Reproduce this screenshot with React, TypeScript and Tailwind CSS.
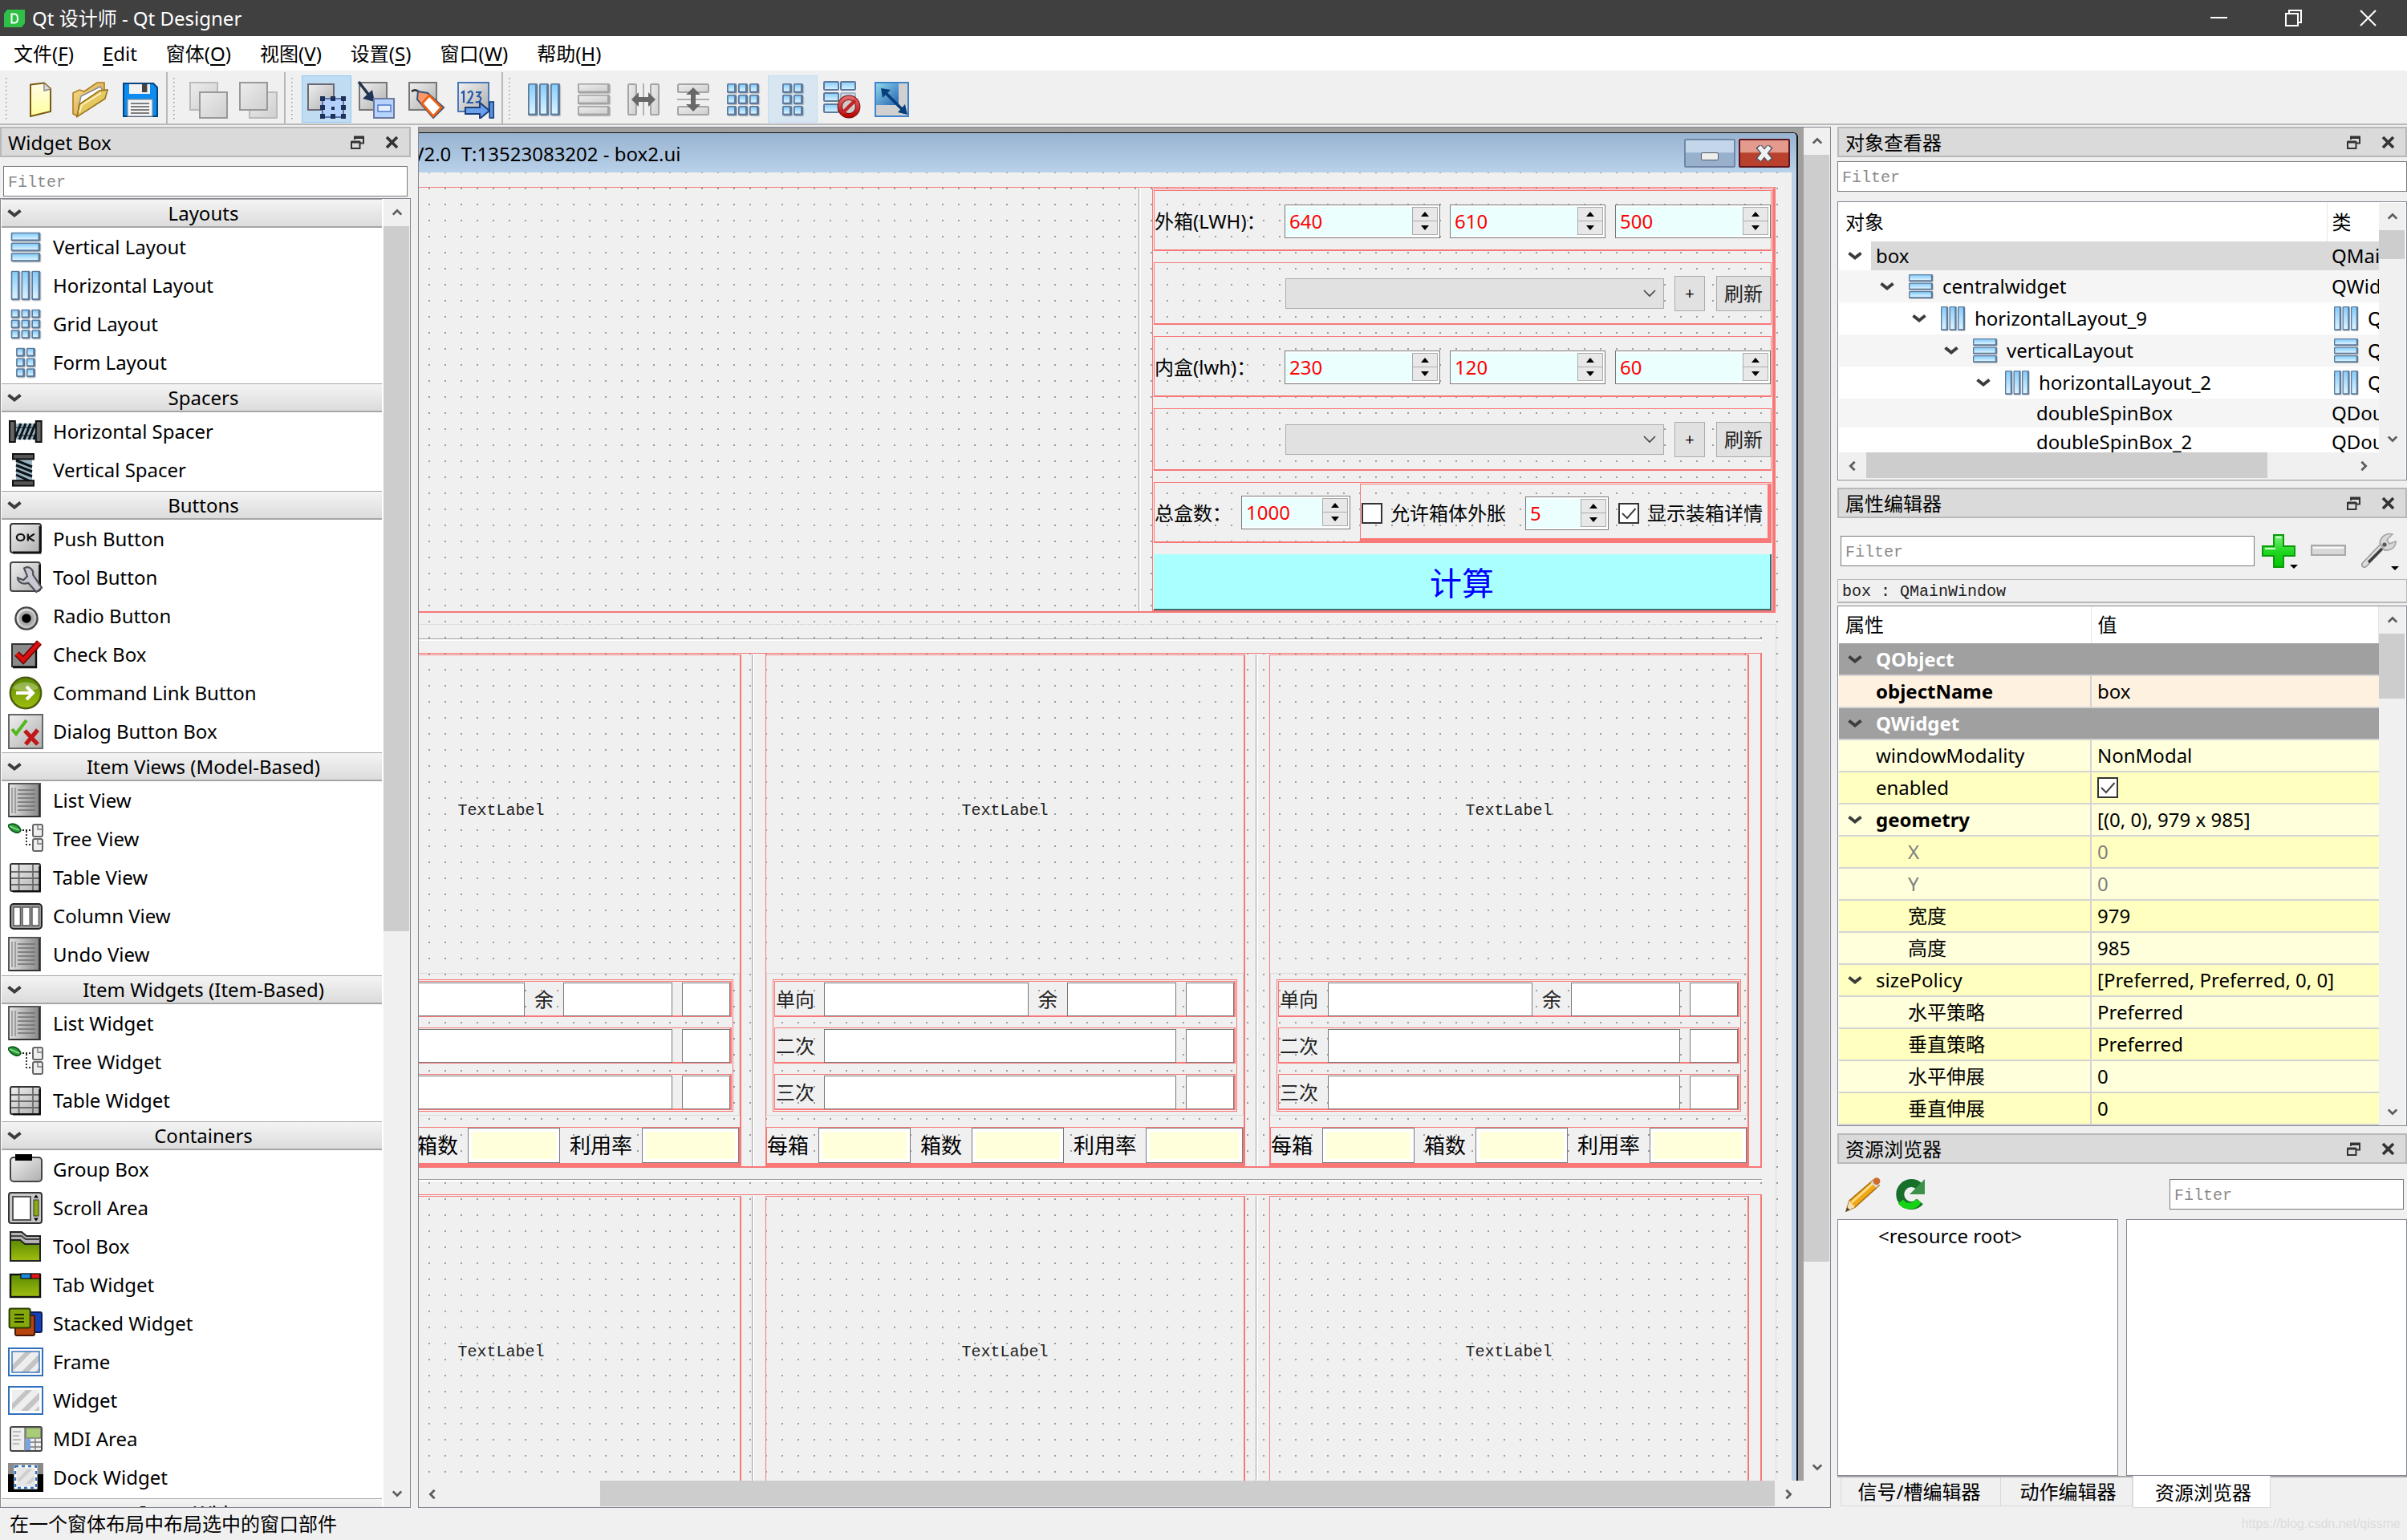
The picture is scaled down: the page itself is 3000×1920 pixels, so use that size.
import type { ReactNode } from 'react'

/* ---------- shared svg paint ---------- */

function PaintDefs() {
  return (
    <svg className="absolute h-0 w-0" aria-hidden="true">
      <defs>
        <linearGradient id="blue" x1="0" y1="0" x2="0" y2="1">
          <stop offset="0" stopColor="#86cdfb" />
          <stop offset="1" stopColor="#dcf3ff" />
        </linearGradient>
        <linearGradient id="gray" x1="0" y1="0" x2="1" y2="1">
          <stop offset="0" stopColor="#f0f0f0" />
          <stop offset="1" stopColor="#aeaeae" />
        </linearGradient>
        <linearGradient id="dark" x1="0" y1="0" x2="1" y2="0">
          <stop offset="0" stopColor="#e4e4e4" />
          <stop offset="1" stopColor="#858585" />
        </linearGradient>
        <linearGradient id="pale" x1="0" y1="0" x2="1" y2="1">
          <stop offset="0" stopColor="#ececec" />
          <stop offset="1" stopColor="#cfcfcf" />
        </linearGradient>
        <linearGradient id="yellow" x1="0" y1="0" x2="0" y2="1">
          <stop offset="0" stopColor="#fffbe8" />
          <stop offset="1" stopColor="#ffff9c" />
        </linearGradient>
        <linearGradient id="green" x1="0" y1="0" x2="0" y2="1">
          <stop offset="0" stopColor="#5a8a00" />
          <stop offset="1" stopColor="#a0be10" />
        </linearGradient>
        <linearGradient id="lime" x1="0" y1="0" x2="0" y2="1">
          <stop offset="0" stopColor="#7ef07e" />
          <stop offset="0.5" stopColor="#22d822" />
          <stop offset="1" stopColor="#04c404" />
        </linearGradient>
        <linearGradient id="folder" x1="0" y1="0" x2="1" y2="1">
          <stop offset="0" stopColor="#fbe09a" />
          <stop offset="1" stopColor="#c89a28" />
        </linearGradient>
        <linearGradient id="red" x1="0" y1="0" x2="0" y2="1">
          <stop offset="0" stopColor="#e06a6a" />
          <stop offset="1" stopColor="#b80808" />
        </linearGradient>
        <linearGradient id="sky" x1="0" y1="0" x2="1" y2="1">
          <stop offset="0" stopColor="#8fd8ea" />
          <stop offset="1" stopColor="#2463b4" />
        </linearGradient>
      </defs>
    </svg>
  )
}

function Icon({ children, size = 'size-11', box = '0 0 22 22' }: { children: ReactNode; size?: string; box?: string }) {
  return <svg viewBox={box} className={`${size} shrink-0`} fill="none" aria-hidden="true">{children}</svg>
}

/* layout icons are all a block of cols x rows tiles */
function Cells({ cols, rows, size = 'size-11', gray }: { cols: number; rows: number; size?: string; gray?: boolean }) {
  const total = cols === 2 ? 13 : 20
  const left = (24 - total) / 2
  const w = (total - (cols - 1)) / cols
  const h = (20 - (rows - 1)) / rows
  const tiles = []
  for (let c = 0; c < cols; c++) {
    for (let r = 0; r < rows; r++) {
      const x = left + c * (w + 1)
      const y = 2 + r * (h + 1)
      tiles.push(
        <g key={`${c}-${r}`}>
          <rect x={x + 0.6} y={y + 0.6} width={w} height={h} rx="0.8" fill="#000" opacity="0.18" />
          <rect x={x} y={y} width={w} height={h} rx="0.8" fill={gray ? '#a2a2a2' : '#5d7a9c'} />
          <rect x={x + 0.9} y={y + 0.8} width={w - 2.4} height={h - 2} fill={gray ? 'url(#pale)' : 'url(#blue)'} />
        </g>
      )
    }
  }
  return <Icon size={size} box="0 0 24 24">{tiles}</Icon>
}

function Chevron({ className = 'h-3 w-[18px]' }: { className?: string }) {
  return (
    <svg viewBox="0 0 18 12" className={`${className} shrink-0`} fill="none" stroke="#3c3c3c" strokeWidth="4" aria-hidden="true">
      <path d="M1.5 2.5 9 8.5l7.5-6" />
    </svg>
  )
}

/* ---------- widget box icons ---------- */

const okIcon = (
  <Icon>
    <rect x="1.5" y="1.5" width="19" height="18" rx="1.5" fill="url(#gray)" stroke="#333" />
    <path d="M20 3v16.5H3" stroke="#111" strokeWidth="1.4" />
    <ellipse cx="7.8" cy="10" rx="2.4" ry="2" stroke="#111" strokeWidth="1.1" />
    <path d="M12.4 7.8v4.5M16.4 7.8l-3.6 2.4 3.6 2.1" stroke="#111" strokeWidth="1.1" />
  </Icon>
)
const toolIcon = (
  <Icon>
    <rect x="1.5" y="1.5" width="18.5" height="18" rx="1.5" fill="url(#gray)" stroke="#444" />
    <path d="M19.800 3v16" stroke="#111" strokeWidth="1.4" />
    <path d="M10 5.2c3-1.6 6 .4 5.6 4.2l5.400 8-3.400 2.600-5-5.600c-3 1.2-6.4-.2-6.6-3.200l3.600 1.4 2.400-2.400z" fill="#c8c8d2" stroke="#50505a" strokeWidth="1.100" />
  </Icon>
)
const radioIcon = (
  <Icon>
    <circle cx="11.5" cy="12.5" r="6.8" fill="url(#gray)" stroke="#444" strokeWidth="1.2" />
    <circle cx="11.5" cy="12.5" r="4.8" fill="#aaa" />
    <circle cx="11.5" cy="12.5" r="2.9" fill="#000" />
  </Icon>
)
const checkIcon = (
  <Icon>
    <rect x="2.5" y="4.5" width="15" height="14" fill="#8a8a8a" stroke="#333" />
    <path d="M17.5 6v13H3" stroke="#111" strokeWidth="1.2" />
    <path d="M5.5 10.5 9.5 14.5 19.5 3.5" stroke="#600" strokeWidth="4" />
    <path d="M5.5 10.5 9.5 14.5 19.5 3.5" stroke="#d81010" strokeWidth="2.6" />
  </Icon>
)
const commandIcon = (
  <Icon>
    <circle cx="11" cy="11" r="9.6" fill="url(#green)" stroke="#4c5c10" strokeWidth="1.2" />
    <path d="M3 8a9 7 0 0 1 16 0q-8 4-16 0z" fill="#fff" opacity="0.3" />
    <path d="M5 11h10M11.500 7l4 4-4 4" stroke="#fff" strokeWidth="2" />
  </Icon>
)
const dialogIcon = (
  <Icon>
    <rect x="0.5" y="0.5" width="21" height="21" fill="url(#gray)" stroke="#666" />
    <path d="M2.5 9.5 5 12.500 11.500 4" stroke="#52b81c" strokeWidth="2" />
    <path d="M10.5 10.5 18.5 19M18.5 10 11 19" stroke="#c01818" strokeWidth="2.6" />
  </Icon>
)
const hSpacerIcon = (
  <Icon>
    <rect x="4" y="6" width="14" height="10" fill="#9ab4c4" />
    <path d="M4 16 8 6M7 16l4-10M10 16l4-10M13 16l4-10M16 16l2-5" stroke="#0c1418" strokeWidth="1.5" />
    <path d="M4 8.500h14M4 13.500h14" stroke="#0c1418" strokeWidth="0.6" />
    <rect x="1" y="4.500" width="3.4" height="13" fill="#666" stroke="#111" />
    <rect x="17.4" y="4.500" width="3.4" height="13" fill="#666" stroke="#111" />
  </Icon>
)
const vSpacerIcon = (
  <Icon>
    <rect x="5" y="4" width="10" height="14" fill="#9ab4c4" />
    <path d="M5 5 15 9M5 8l10 4M5 11l10 4M5 14l9 4" stroke="#0c1418" strokeWidth="1.5" />
    <rect x="3" y="1" width="13" height="3.2" fill="#555" stroke="#111" />
    <rect x="3" y="17.6" width="13" height="3.2" fill="#555" stroke="#111" />
  </Icon>
)
const listIcon = (
  <Icon>
    <rect x="0.5" y="0.5" width="19.5" height="20.5" fill="url(#dark)" stroke="#555" />
    <path d="M2.5 3v16M4.500 3v16" stroke="#888" strokeWidth="0.7" />
    <path d="M6 4.500h11M6 7h11M6 9.500h11M6 12h11M6 14.500h11M6 17h11" stroke="#707070" strokeWidth="0.700" />
    <path d="M19.500 1v20H1" stroke="#333" strokeWidth="1" />
  </Icon>
)
const treeIcon = (
  <Icon>
    <path d="M0 2.500C3 .5 6.500 2 8 5.500 7 8.500 2 7 0 2.500z" fill="#2c9c3c" stroke="#0d5a1a" strokeWidth="0.9" />
    <path d="M1 3l6 2.6" stroke="#9be29b" strokeWidth="0.7" />
    <path d="M9 5.500h5M11.500 6v8.500h3" stroke="#222" strokeWidth="0.9" strokeDasharray="1 1" />
    <rect x="15.5" y="2" width="6" height="7.500" rx="1" fill="#eee" stroke="#666" />
    <rect x="15.5" y="11" width="6" height="7.500" rx="1" fill="#eee" stroke="#666" />
    <path d="M18.500 2v3h3M18.500 11v3h3" stroke="#777" strokeWidth="0.700" />
  </Icon>
)
const tableIcon = (
  <Icon>
    <rect x="1.5" y="2.5" width="18.5" height="17" rx="1" fill="url(#gray)" stroke="#333" />
    <path d="M2 7.500h18M2 11.500h18M2 15.500h18M6.800 3v16M15.500 3v16" stroke="#6a6a6a" strokeWidth="0.9" />
    <path d="M19.800 4v15.600H3" stroke="#111" strokeWidth="1.3" />
  </Icon>
)
const columnIcon = (
  <Icon>
    <rect x="1.5" y="3.5" width="19.5" height="15.5" rx="2" fill="#999" stroke="#222" />
    <path d="M3.500 5.500h4.200v11.500H3.500zM9 5.500h4.600v11.500H9zM15 5.500h4.200v11.500H15z" fill="#fff" stroke="#555" strokeWidth="0.7" />
  </Icon>
)
const groupIcon = (
  <Icon>
    <rect x="1.5" y="3.5" width="19.5" height="15" rx="2" fill="url(#gray)" stroke="#444" />
    <rect x="4.5" y="1.5" width="10.5" height="4" fill="#000" />
  </Icon>
)
const scrollIcon = (
  <Icon>
    <rect x="0.5" y="1.5" width="20.5" height="19" rx="1.5" fill="#c8c8c8" stroke="#333" />
    <rect x="3" y="4" width="11" height="14.5" fill="#fff" stroke="#555" />
    <rect x="16" y="6" width="3" height="10" fill="#8cae08" stroke="#333" strokeWidth="0.5" />
    <path d="M16 4.800l1.500-2 1.500 2zM16 17.200l1.500 2 1.500-2z" fill="#000" />
  </Icon>
)
const toolBoxIcon = (
  <Icon>
    <path d="M1.500 2h7l3 2.500h8.500V20H1.500z" fill="#b4b4b4" stroke="#222" />
    <path d="M1.500 7h6l3 2.500h9.500V20H1.500z" fill="url(#green)" stroke="#222" />
    <path d="M2 4.500h6.500l2.500 2h9" stroke="#444" strokeWidth="0.9" />
  </Icon>
)
const tabIcon = (
  <Icon>
    <rect x="1.5" y="4.5" width="18.5" height="14" fill="url(#green)" stroke="#111" strokeWidth="1.2" />
    <rect x="8" y="4" width="6" height="3" fill="#1a8be0" stroke="#111" strokeWidth="0.6" />
    <rect x="14.4" y="4" width="5.4" height="3" fill="#e81414" stroke="#111" strokeWidth="0.6" />
  </Icon>
)
const stackedIcon = (
  <Icon>
    <rect x="9" y="4" width="12" height="12.5" rx="1" fill="#1440b8" stroke="#0a1c58" />
    <rect x="4.5" y="6" width="12" height="12.5" rx="1" fill="#b84410" stroke="#481804" />
    <rect x="0.8" y="1.8" width="13" height="12" rx="1" fill="#86a80c" stroke="#2a3a04" />
    <path d="M4 5.500h6M4 7.800h6M4 10h6" stroke="#1a2a00" strokeWidth="0.9" />
  </Icon>
)
const stripes = (
  <>
    <rect x="2.5" y="4.5" width="17" height="13" fill="#eee" />
    <path d="M2.500 13 11 4.500h4L2.500 17zM8 17.500 19.500 6v4.500l-7 7zM16.500 17.500l3-3v3z" fill="#c4c4c4" />
  </>
)
const frameIcon = (
  <Icon>
    <rect x="0.5" y="2.5" width="21" height="17" fill="#fff" stroke="#3070bc" />
    {stripes}
    <rect x="2.5" y="4.5" width="17" height="13" stroke="#3070bc" strokeWidth="0.7" />
  </Icon>
)
const widgetIcon = (
  <Icon>
    <rect x="0.5" y="2.5" width="21" height="17" fill="#fff" stroke="#3070bc" />
    {stripes}
  </Icon>
)
const mdiIcon = (
  <Icon>
    <rect x="1.5" y="3.5" width="19.5" height="15" rx="1" fill="#eee" stroke="#444" />
    <rect x="11" y="4" width="9.5" height="6.5" fill="#a8cc78" stroke="#666" strokeWidth="0.6" />
    <path d="M11 11h3v7h-3z" fill="#7aa4e0" />
    <path d="M3 6.500h5M3 9h4M3 11.500h5M3 14h4" stroke="#aaa" strokeWidth="0.8" />
    <path d="M10.500 4v14.500M14 13h6.500M14 16h6.500M17 11v7" stroke="#777" strokeWidth="0.7" />
  </Icon>
)
const dockIcon = (
  <Icon>
    <path d="M0 2h22v18H0z" fill="#000" />
    <path d="M0 2h22v7H0z" fill="#8a8a8a" />
    <rect x="4.5" y="4" width="13" height="13.5" fill="#e6e6e6" stroke="#fff" strokeWidth="1.6" />
    <rect x="4.5" y="4" width="13" height="13.5" stroke="#3070bc" strokeWidth="1.2" strokeDasharray="2 2" />
    <path d="M6 12l6-6h3l-8 8zM11 15l5-5v3l-2 2z" fill="#cfcfcf" />
  </Icon>
)

const widgetGroups: { title: string; items: [string, ReactNode][] }[] = [
  {
    title: 'Layouts',
    items: [
      ['Vertical Layout', <Cells cols={1} rows={3} />],
      ['Horizontal Layout', <Cells cols={3} rows={1} />],
      ['Grid Layout', <Cells cols={3} rows={3} />],
      ['Form Layout', <Cells cols={2} rows={3} />],
    ],
  },
  { title: 'Spacers', items: [['Horizontal Spacer', hSpacerIcon], ['Vertical Spacer', vSpacerIcon]] },
  {
    title: 'Buttons',
    items: [
      ['Push Button', okIcon],
      ['Tool Button', toolIcon],
      ['Radio Button', radioIcon],
      ['Check Box', checkIcon],
      ['Command Link Button', commandIcon],
      ['Dialog Button Box', dialogIcon],
    ],
  },
  {
    title: 'Item Views (Model-Based)',
    items: [
      ['List View', listIcon],
      ['Tree View', treeIcon],
      ['Table View', tableIcon],
      ['Column View', columnIcon],
      ['Undo View', listIcon],
    ],
  },
  {
    title: 'Item Widgets (Item-Based)',
    items: [['List Widget', listIcon], ['Tree Widget', treeIcon], ['Table Widget', tableIcon]],
  },
  {
    title: 'Containers',
    items: [
      ['Group Box', groupIcon],
      ['Scroll Area', scrollIcon],
      ['Tool Box', toolBoxIcon],
      ['Tab Widget', tabIcon],
      ['Stacked Widget', stackedIcon],
      ['Frame', frameIcon],
      ['Widget', widgetIcon],
      ['MDI Area', mdiIcon],
      ['Dock Widget', dockIcon],
    ],
  },
  { title: 'Input Widgets', items: [] },
]

/* ---------- toolbar ---------- */

const T = ({ children }: { children: ReactNode }) => <Icon size="size-12" box="0 0 24 24">{children}</Icon>

const grayPage = <rect x="1.5" y="1.5" width="17" height="17" fill="url(#gray)" stroke="#777" />

const toolGroups: { label: string; icon: ReactNode; state?: 'on' | 'hover' }[][] = [
  [
    {
      label: '新建',
      icon: (
        <T>
          <path d="M5.500 2.800 14 1.800l4 3.500V19.500L5.500 22.500z" fill="url(#yellow)" stroke="#7a5a10" />
          <path d="M14 2v4.500l4-1" fill="#ddd" stroke="#888" strokeWidth="0.7" />
        </T>
      ),
    },
    {
      label: '打开',
      icon: (
        <T>
          <path d="M1 8 5 6l3 1L16 1.500h4.500v6L3 22 1 21z" fill="url(#folder)" stroke="#b07c1c" strokeWidth="0.8" />
          <path d="M4.500 17 6 10l12-6 2 3.500z" fill="#fff" stroke="#889" strokeWidth="0.7" />
          <path d="M3.500 22.800 5 15l12.500-8.500 5-.5-1.500 5.500z" fill="#e4c860" stroke="#98701c" strokeWidth="0.8" />
          <path d="M5 20l1.500-4.500 12-7.500" stroke="#fff6c0" strokeWidth="0.9" />
        </T>
      ),
    },
    {
      label: '保存',
      icon: (
        <T>
          <path d="M1.500 2h18.500l2.500 2.500V22.500h-21z" fill="#0c8cf0" stroke="#06447c" />
          <rect x="5" y="2.5" width="13" height="6" fill="#f2f2f2" />
          <rect x="13" y="2.5" width="3.2" height="5" fill="#444" />
          <rect x="4" y="12" width="15.5" height="10.5" fill="#f4f4f4" stroke="#888" strokeWidth="0.5" />
          <path d="M6 14.500h11.500M6 16.500h11.500M6 18.500h11.500M6 20.500h11.500" stroke="#555" strokeWidth="0.8" />
        </T>
      ),
    },
  ],
  [
    {
      label: '放到后面',
      icon: <T><rect x="0.5" y="1.5" width="17" height="17" fill="url(#pale)" stroke="#bbb" /><rect x="6.5" y="7.5" width="17" height="16" fill="url(#pale)" stroke="#999" /></T>,
    },
    {
      label: '放到前面',
      icon: <T><rect x="6.5" y="7.5" width="17" height="16" fill="url(#pale)" stroke="#bbb" /><rect x="0.5" y="1.5" width="17" height="17" fill="url(#pale)" stroke="#999" /></T>,
    },
  ],
  [
    {
      label: '编辑窗口部件',
      state: 'on',
      icon: (
        <T>
          <rect x="0.5" y="2.5" width="16" height="16" fill="url(#gray)" stroke="#6a6a74" />
          <rect x="9.5" y="11.5" width="13" height="11.5" fill="#b4d0fc" stroke="#5876a8" />
          <path d="M8 10h3v3H8zM14.500 10h3v3h-3zM21 10h3v3h-3zM8 15.500h3v3H8zM21 15.500h3v3h-3zM8 21h3v3H8zM14.500 21h3v3h-3zM21 21h3v3h-3zM15 16.500h2v2h-2z" fill="#1c3058" />
        </T>
      ),
    },
    {
      label: '编辑信号/槽',
      icon: (
        <T>
          {grayPage}
          <path d="M1 1l7 9" stroke="#24344c" strokeWidth="1.8" />
          <path d="M11 13.500 3.500 11.500l6-5.500z" fill="#203458" />
          <rect x="10.5" y="11.5" width="12.5" height="12" fill="#b8d4fc" stroke="#6a7aa0" />
          <path d="M13 15.500h8v4h-8z" fill="#e4eefe" stroke="#4c78c8" strokeWidth="0.7" />
        </T>
      ),
    },
    {
      label: '编辑伙伴',
      icon: (
        <T>
          {grayPage}
          <path d="M3 7q3-2 5 1" stroke="#333" strokeWidth="1.4" />
          <path d="M6.500 12 7 7l6 1 10 9-6.500 6.500z" fill="#fa9a68" stroke="#3a5478" />
          <path d="M14 9.500l7.500 7.500-5 5.500-7-8z" fill="#fff" stroke="#f06010" strokeWidth="1.4" />
        </T>
      ),
    },
    {
      label: '编辑Tab顺序',
      icon: (
        <T>
          <rect x="1" y="1.5" width="19" height="18" fill="url(#gray)" stroke="#4878b8" />
          <path d="M3 8l1.500-1v7M7 8q2.500-2.500 3 .5Q9.500 11 7 14h3.500M12 7.500h3L13.300 10q3 .5 1.200 3.200-1 .8-2.700.3" stroke="#2458a8" strokeWidth="1.1" />
          <path d="M5.500 17h9v-3l6 5-6 5v-3h-9z" fill="#68a0ec" stroke="#1c3c78" />
          <rect x="20.6" y="13.500" width="2.5" height="10" fill="#5c94e4" stroke="#1c3c78" strokeWidth="0.8" />
        </T>
      ),
    },
  ],
  [
    { label: '水平布局', icon: <Cells cols={3} rows={1} size="size-12" /> },
    { label: '垂直布局', icon: <Cells cols={1} rows={3} size="size-12" gray /> },
    {
      label: '使用分裂器水平布局',
      icon: (
        <T>
          <rect x="2.5" y="2.5" width="5" height="19" rx="0.8" fill="url(#pale)" stroke="#a4a4a4" />
          <rect x="16.5" y="2.5" width="5" height="19" rx="0.8" fill="url(#pale)" stroke="#a4a4a4" />
          <path d="M12 2v20" stroke="#999" strokeWidth="0.7" />
          <path d="M4.500 12 9 7.500v3h6v-3l4.500 4.500-4.500 4.500v-3H9v3z" fill="#686868" />
        </T>
      ),
    },
    {
      label: '使用分裂器垂直布局',
      icon: (
        <T>
          <rect x="2.5" y="2.5" width="19" height="5" rx="0.8" fill="url(#pale)" stroke="#a4a4a4" />
          <rect x="2.5" y="16.5" width="19" height="5" rx="0.8" fill="url(#pale)" stroke="#a4a4a4" />
          <path d="M2 12h20" stroke="#999" strokeWidth="0.7" />
          <path d="M12 4.500 16.500 9h-3v6h3L12 19.500 7.500 15h3V9h-3z" fill="#686868" />
        </T>
      ),
    },
    { label: '栅格布局', icon: <Cells cols={3} rows={3} size="size-12" /> },
    { label: '在窗体布局中布局', state: 'hover', icon: <Cells cols={2} rows={3} size="size-12" /> },
    {
      label: '打破布局',
      icon: (
        <T>
          <g fill="url(#blue)" stroke="#5d7a9c">
            <rect x="0.5" y="1" width="9" height="5" rx="0.6" />
            <rect x="11" y="1" width="9" height="5" rx="0.6" />
            <rect x="0.5" y="8" width="9" height="5" rx="0.6" />
            <rect x="0.5" y="15" width="9" height="5" rx="0.6" />
            <rect x="11" y="8" width="9" height="5" rx="0.6" opacity="0.5" />
          </g>
          <circle cx="16" cy="16.5" r="5.6" fill="#ccc" stroke="#7a1010" strokeWidth="3.2" />
          <circle cx="16" cy="16.5" r="5.6" stroke="url(#red)" strokeWidth="2.2" />
          <path d="M12 20.500l8-8" stroke="#c42424" strokeWidth="2.2" />
        </T>
      ),
    },
    {
      label: '调整大小',
      icon: (
        <T>
          <rect x="1.5" y="1.5" width="20.5" height="21" fill="#d0d0d0" stroke="#3c84cc" />
          <rect x="2" y="2" width="14" height="13.5" fill="url(#sky)" />
          <path d="M7 7l11 11" stroke="#0a3c78" strokeWidth="1.8" />
          <path d="M5 5l6 1-5 5zM21.500 21.500l-6-1.500 4.500-5z" fill="#06407c" />
        </T>
      ),
    },
  ],
]

function ToolBar() {
  const stateClass = { on: 'border-[#90c8f6] bg-[#c0dcf3]', hover: 'border-[#c0dcf3] bg-[#d8e6f1]', none: 'border-transparent' }
  return (
    <div className="flex h-[66px] border-b-2 border-[#b8b8b8]">
      {toolGroups.map((group, i) => (
        <div key={i} className={`flex items-end gap-2 pr-px pb-px pl-[5px] ${i < 3 ? 'border-r-2 border-[#b8b8b8]' : ''}`}>
          <span className="mb-1 h-[54px] w-[7px] bg-[radial-gradient(#b0b0b0_1px,transparent_1px)] bg-[size:5px_5px]" />
          <div className="flex">
            {group.map(tool => (
              <button
                key={tool.label}
                aria-label={tool.label}
                className={`flex h-[59px] w-[62px] items-center justify-center border ${stateClass[tool.state || 'none']}`}
              >
                {tool.icon}
              </button>
            ))}
          </div>
        </div>
      ))}
    </div>
  )
}

/* ---------- small controls ---------- */

const thin = "font-['Liberation_Mono','Noto_Sans_CJK_SC',monospace] text-[20px] text-[#222]"

function Filter({ label, className }: { label: string; className: string }) {
  return (
    <input
      aria-label={label}
      placeholder="Filter"
      className={`h-[38px] min-w-0 border border-[#7a7a7a] bg-white px-[5px] pt-[3px] placeholder:text-[#8a8a8a] ${thin} ${className}`}
    />
  )
}

const arrowPaths = { up: 'M2 11 8 5l6 6', down: 'M2 5l6 6 6-6', left: 'M11 2 5 8l6 6', right: 'M5 2l6 6-6 6' }

function ArrowButton({ dir, className }: { dir: keyof typeof arrowPaths; className: string }) {
  return (
    <button aria-label={dir} className={`flex shrink-0 items-center justify-center ${className}`}>
      <svg viewBox="0 0 16 16" className="size-[14px]" fill="none" stroke="#5c5c5c" strokeWidth="3.2"><path d={arrowPaths[dir]} /></svg>
    </button>
  )
}

function ScrollV({ thumb }: { thumb: string }) {
  return (
    <div className="flex w-[33px] shrink-0 flex-col bg-[#f0f0f0]">
      <ArrowButton dir="up" className="h-[34px]" />
      <div className="min-h-0 flex-1"><div className={`w-8 bg-[#cdcdcd] ${thumb}`} /></div>
      <ArrowButton dir="down" className="h-[34px]" />
    </div>
  )
}

function ScrollH({ thumb, end }: { thumb: string; end?: boolean }) {
  return (
    <div className="flex h-[33px] shrink-0 bg-[#f0f0f0] pr-[35px]">
      <ArrowButton dir="left" className="w-[34px]" />
      <div className={`flex flex-1 ${end ? 'justify-end' : ''}`}><div className={`h-8 bg-[#cdcdcd] ${thumb}`} /></div>
      <ArrowButton dir="right" className="w-[34px]" />
    </div>
  )
}

function DockTitle({ title }: { title: string }) {
  return (
    <header className="flex h-[38px] shrink-0 items-center gap-[26px] border-2 border-[#b8b8b8] bg-[#dadada] pr-[13px] pl-2">
      <h2 className="flex-1 pt-[2px]">{title}</h2>
      <button aria-label={`${title} 浮动`}>
        <svg viewBox="0 0 17 17" className="size-[17px]" fill="none" stroke="#333" strokeWidth="2">
          <path d="M5 5V1.500h11v8h-4" /><path d="M5 2.500h11" strokeWidth="3" /><path d="M1 8h10.500v8H1z" /><path d="M1 8h10.500" strokeWidth="3" />
        </svg>
      </button>
      <button aria-label={`${title} 关闭`}>
        <svg viewBox="0 0 17 17" className="size-[17px]" fill="none" stroke="#333" strokeWidth="3.6"><path d="M2 2l13 13M15 2 2 15" /></svg>
      </button>
    </header>
  )
}

function CheckBox({ id, checked }: { id: string; checked?: boolean }) {
  return (
    <span className="grid shrink-0">
      <input id={id} type="checkbox" defaultChecked={checked} className="col-start-1 row-start-1 size-[26px] appearance-none border-2 border-[#333] bg-white" />
      {checked && (
        <svg viewBox="0 0 26 26" className="pointer-events-none col-start-1 row-start-1 size-[26px]" fill="none" stroke="#444" strokeWidth="2">
          <path d="M5 13l6 6L21.500 7" />
        </svg>
      )}
    </span>
  )
}

function SpinBox({ id, label, value, width }: { id?: string; label?: string; value: string; width: string }) {
  return (
    <div className={`flex h-[42px] shrink-0 border border-[#7a7a7a] bg-white ${width}`}>
      <input id={id} aria-label={label} defaultValue={value} className="my-[2px] min-w-0 flex-1 bg-[#ebffff] pl-[5px] text-[24px] text-[#ff0000]" />
      <div className="mt-[2px] mr-[2px] flex h-[35px] w-8 flex-col border border-[#acacac] bg-[#e8e8e8]">
        <button type="button" aria-label="增加" className="flex flex-1 items-center justify-center border-b border-[#acacac]">
          <svg viewBox="0 0 12 8" className="h-2 w-3"><path d="M6 1l5 6H1z" /></svg>
        </button>
        <button type="button" aria-label="减少" className="flex flex-1 items-center justify-center">
          <svg viewBox="0 0 12 8" className="h-2 w-3"><path d="M6 7 1 1h10z" /></svg>
        </button>
      </div>
    </div>
  )
}

/* ---------- left dock ---------- */

function WidgetBox() {
  return (
    <aside className="flex w-[512px] shrink-0 flex-col pt-[2px]">
      <DockTitle title="Widget Box" />
      <Filter label="Widget filter" className="mx-1 mt-[11px] shrink-0" />
      <div className="mt-[2px] flex min-h-0 flex-1 border border-[#828790] bg-white">
        <div className="min-w-0 flex-1 overflow-hidden">
          {widgetGroups.map(group => (
            <section key={group.title} className="pr-[2px] pb-[2px] pl-px">
              <button className="flex h-9 w-full items-center gap-[6px] border-t border-b-2 border-[#a6a6a6] bg-linear-to-b from-[#f4f4f4] to-[#dcdcdc] pl-[7px]">
                <Chevron />
                <span className="flex-1 pt-px pr-[2px] text-center">{group.title}</span>
              </button>
              <ul>
                {group.items.map(([name, icon]) => (
                  <li key={name} className="flex h-12 items-center gap-3 pl-2">
                    {icon}
                    <span>{name}</span>
                  </li>
                ))}
              </ul>
            </section>
          ))}
        </div>
        <ScrollV thumb="h-[calc(56%+4px)]" />
      </div>
    </aside>
  )
}

/* ---------- form being designed ---------- */

function SizeRow({ id, label, values }: { id: string; label: string; values: string[] }) {
  return (
    <div className="flex h-[76px] items-center gap-3 border border-b-2 border-[#f87878] pt-[3px]">
      <label htmlFor={id} className="flex-1">{label}</label>
      {values.map((v, i) => (
        <SpinBox key={i} id={i === 0 ? id : undefined} label={i === 0 ? undefined : `${label}${i + 1}`} value={v} width="w-[194px]" />
      ))}
    </div>
  )
}

function PresetRow({ label }: { label: string }) {
  return (
    <div className="flex h-[78px] items-center justify-end border border-b-2 border-[#f87878] pt-px">
      <div className="grid w-[472px]">
        <select disabled aria-label={label} className="col-start-1 row-start-1 h-[38px] appearance-none border border-[#acacac] bg-[#e1e1e1]" />
        <svg viewBox="0 0 16 10" className="pointer-events-none col-start-1 row-start-1 mr-[10px] h-[10px] w-4 self-center justify-self-end" fill="none" stroke="#444" strokeWidth="1.6"><path d="M1 1l7 7 7-7" /></svg>
      </div>
      <button type="button" className="ml-[13px] h-11 w-[38px] border border-[#acacac] bg-[#e1e1e1] text-[20px]">+</button>
      <button type="button" className="ml-[14px] h-11 w-[68px] border border-[#acacac] bg-[#e1e1e1] text-[#222]">刷新</button>
    </div>
  )
}

const field = 'h-[42px] border border-[#7a7a7a] bg-white'
const yellowField = 'h-11 min-w-0 border border-[#7a7a7a] bg-[#ffffdc] shadow-[inset_0_0_0_4px_#fff]'

function PackColumn({ name }: { name: string }) {
  return (
    <div className="flex w-[598px] shrink-0 flex-col border border-r-2 border-b-0 border-[#f87878]">
      <p className={`mb-2 flex h-[388px] items-center justify-center ${thin}`}>TextLabel</p>
      <div className="h-[178px] border border-[#dcdcdc] p-[7px]">
        <div className="flex flex-col gap-[13px] border border-[#f87878] p-px">
          {['单向', '二次', '三次'].map((step, i) => (
            <div key={step} className="flex h-[45px] gap-3 border border-r-2 border-b-2 border-[#f87878] pt-px pl-px">
              <label htmlFor={`${name}-${i}`} className="w-12 self-center text-[#222]">{step}</label>
              <input id={`${name}-${i}`} className={`${field} min-w-0 flex-1`} />
              {i === 0 && <label htmlFor={`${name}-rest`} className="w-6 self-center text-[#222]">余</label>}
              {i === 0 && <input id={`${name}-rest`} className={`${field} w-[136px]`} />}
              <input aria-label={`${step} 数量`} className={`${field} w-[60px]`} />
            </div>
          ))}
        </div>
      </div>
      <div className="mt-[14px] flex h-[49px] items-center gap-3 border border-b-4 border-[#f87878] text-[26px]">
        <label htmlFor={`${name}-per`}>每箱</label>
        <input id={`${name}-per`} className={`${yellowField} w-[115px]`} />
        <label htmlFor={`${name}-count`}>箱数</label>
        <input id={`${name}-count`} className={`${yellowField} w-[115px]`} />
        <label htmlFor={`${name}-rate`}>利用率</label>
        <input id={`${name}-rate`} className={`${yellowField} flex-1`} />
      </div>
    </div>
  )
}

function ColumnRule() {
  return <div className="w-[30px] shrink-0 pl-[13px]"><div className="h-full w-[3px] border-l border-[#a0a0a0] bg-white" /></div>
}

function PackSection({ name }: { name: string }) {
  return (
    <div className="mr-[17px] flex shrink-0 justify-end border-t border-r-2 border-b-2 border-[#f87878] pt-px pr-[14px]">
      <PackColumn name={`${name}-a`} />
      <ColumnRule />
      <PackColumn name={`${name}-b`} />
      <ColumnRule />
      <PackColumn name={`${name}-c`} />
    </div>
  )
}

function FormCanvas() {
  return (
    <form className="flex w-[1958px] shrink-0 flex-col bg-[#f0f0f0] bg-[conic-gradient(at_2px_2px,transparent_75%,#9c9c9c_0)] bg-[size:20px_20px] bg-[position:19px_19px] pt-[18px] pr-[19px] pl-5">
      <div className="mr-px flex justify-end border-t border-r-2 border-b-2 border-[#f87878] pt-px">
        <div className="mr-[14px] w-[3px] border-l border-[#a0a0a0] bg-white" />
        <div className="flex w-[775px] flex-col gap-[14px] border border-r-2 border-[#f87878] p-px pb-0">
          <SizeRow id="outer" label="外箱(LWH)：" values={['640', '610', '500']} />
          <PresetRow label="外箱预设" />
          <SizeRow id="inner" label="内盒(lwh)：" values={['230', '120', '60']} />
          <PresetRow label="内盒预设" />
          <div className="flex h-[76px] items-center border border-b-2 border-[#f87878]">
            <label htmlFor="total" className="w-[108px] pt-[3px] whitespace-nowrap">总盒数：</label>
            <SpinBox id="total" value="1000" width="w-[136px]" />
            <div className="ml-3 flex h-[72px] flex-1 items-center border border-r-4 border-b-4 border-[#f87878] pt-[5px] pl-px">
              <CheckBox id="bulge" />
              <label htmlFor="bulge" className="ml-[10px] flex-1">允许箱体外胀</label>
              <SpinBox label="外胀" value="5" width="w-[104px]" />
              <span className="w-3" />
              <CheckBox id="detail" checked />
              <label htmlFor="detail" className="mr-[6px] ml-[10px]">显示装箱详情</label>
            </div>
          </div>
          <button type="button" className="h-[70px] border-r-2 border-b-2 border-[#3c6c6c] bg-[#aaffff] pt-[3px] text-[40px] text-[#0000ff]">计算</button>
        </div>
      </div>
      <div className="mt-[14px] flex flex-1 flex-col border-t border-r border-dotted border-[#c8c8c8] pt-[17px]">
        <hr className="mr-[17px] h-[3px] shrink-0 border-t border-[#a0a0a0] bg-white" />
        <div className="h-[15px] shrink-0" />
        <PackSection name="first" />
        <hr className="mt-[14px] mr-[17px] h-[3px] shrink-0 border-t border-[#a0a0a0] bg-white" />
        <div className="h-4 shrink-0" />
        <PackSection name="second" />
      </div>
    </form>
  )
}

function MdiArea() {
  return (
    <main className="mt-[2px] mr-2 ml-[9px] flex min-w-0 flex-1 flex-col border border-[#828790]">
      <div className="flex min-h-0 flex-1">
        <div className="flex min-w-0 flex-1 flex-col bg-[#a0a0a0] pt-[6px] pr-[7px]">
          <div className="flex min-h-0 flex-1 flex-col overflow-hidden rounded-tr-md border-t border-r-2 border-[#111] bg-[#b9d1ea]">
            <div className="flex h-[49px] shrink-0 items-center gap-1 bg-linear-to-b from-[#99b4d1] to-[#b9d1ea] pr-2">
              <h1 className="-ml-2 flex-1 pt-[3px] whitespace-pre">{'V2.0  T:13523083202 - box2.ui'}</h1>
              <button aria-label="最小化窗体" className="flex h-9 w-16 items-center justify-center rounded-xs border-2 border-[#7088a8] bg-linear-to-b from-[#c4d6ea] from-45% to-[#98b0cc] to-50% pt-2">
                <span className="h-[10px] w-[22px] rounded-xs border border-[#555c68] bg-[#eee]" />
              </button>
              <button aria-label="关闭窗体" className="flex h-9 w-16 items-center justify-center rounded-xs border-2 border-[#5c1420] bg-linear-to-b from-[#e49a8c] from-45% to-[#b8402c] to-50%">
                <svg viewBox="0 0 24 20" className="h-5 w-6" fill="none">
                  <path d="M4.500 1l15 18M19.500 1l-15 18" stroke="#4c5468" strokeWidth="8" />
                  <path d="M5.500 2l13 16M18.500 2l-13 16" stroke="#f2f2f2" strokeWidth="5.400" />
                </svg>
              </button>
            </div>
            <div className="flex min-h-0 flex-1 justify-end overflow-hidden pr-[6px]">
              <FormCanvas />
            </div>
          </div>
        </div>
        <ScrollV thumb="h-[calc(85%+4px)]" />
      </div>
      <ScrollH thumb="w-[calc(100%-192px)]" end />
    </main>
  )
}

/* ---------- right dock ---------- */

const vIcon = <Cells cols={1} rows={3} size="size-9" />
const hIcon = <Cells cols={3} rows={1} size="size-9" />

const objects: { name: string; cls: string; icon?: ReactNode; clsIcon?: ReactNode; leaf?: boolean }[] = [
  { name: 'box', cls: 'QMainWindow' },
  { name: 'centralwidget', cls: 'QWidget', icon: vIcon },
  { name: 'horizontalLayout_9', cls: 'QHBoxLayout', icon: hIcon, clsIcon: hIcon },
  { name: 'verticalLayout', cls: 'QVBoxLayout', icon: vIcon, clsIcon: vIcon },
  { name: 'horizontalLayout_2', cls: 'QHBoxLayout', icon: hIcon, clsIcon: hIcon },
  { name: 'doubleSpinBox', cls: 'QDoubleSpinBox', leaf: true },
  { name: 'doubleSpinBox_2', cls: 'QDoubleSpinBox', leaf: true },
]

function ObjectInspector() {
  return (
    <section>
      <DockTitle title="对象查看器" />
      <Filter label="对象过滤" className="mt-[5px] w-full" />
      <div className="mt-3 flex h-[348px] flex-col border border-[#828790] bg-white p-px">
        <div className="flex min-h-0 flex-1">
          <div className="min-w-0 flex-1 overflow-hidden">
            <table className="w-full table-fixed border-collapse text-left">
              <thead>
                <tr className="h-12">
                  <th className="pl-2 font-normal">对象</th>
                  <th className="w-[65px] border-l border-[#e5e5e5] pl-[6px] font-normal">类</th>
                </tr>
              </thead>
              <tbody>
                {objects.map((o, i) => (
                  <tr key={o.name} className={i % 2 ? 'bg-[#f5f5f5]' : 'bg-white'}>
                    <td className="p-0">
                      <div className={`flex ${o.icon ? 'h-10' : 'h-9'}`} style={{ paddingLeft: Math.min(i, 5) * 40 }}>
                        <span className="flex w-10 shrink-0 items-center justify-center">{!o.leaf && <Chevron />}</span>
                        <span className={`flex flex-1 items-center gap-[9px] ${o.icon ? 'pl-1' : 'pl-[6px]'} ${i === 0 ? 'bg-[#d9d9d9]' : ''}`}>{o.icon}{o.name}</span>
                      </div>
                    </td>
                    <td className={`overflow-hidden p-0 ${i === 0 ? 'bg-[#d9d9d9]' : ''}`}>
                      <div className="flex items-center gap-[9px] pl-[6px]">{o.clsIcon}{o.cls}</div>
                    </td>
                  </tr>
                ))}
              </tbody>
            </table>
          </div>
          <ScrollV thumb="h-[15%]" />
        </div>
        <ScrollH thumb="w-[83%]" />
      </div>
    </section>
  )
}

type Prop = { name: string; value?: string; kind?: 'group' | 'check'; bold?: boolean; open?: boolean; sub?: boolean; muted?: boolean; bg: string }

const properties: Prop[] = [
  { name: 'QObject', kind: 'group', bg: 'bg-[#a0a0a0]' },
  { name: 'objectName', value: 'box', bold: true, bg: 'bg-[#fff1df]' },
  { name: 'QWidget', kind: 'group', bg: 'bg-[#a0a0a0]' },
  { name: 'windowModality', value: 'NonModal', bg: 'bg-[#ffffdc]' },
  { name: 'enabled', kind: 'check', bg: 'bg-[#ffffbf]' },
  { name: 'geometry', value: '[(0, 0), 979 x 985]', bold: true, open: true, bg: 'bg-[#ffffdc]' },
  { name: 'X', value: '0', sub: true, muted: true, bg: 'bg-[#ffffbf]' },
  { name: 'Y', value: '0', sub: true, muted: true, bg: 'bg-[#ffffdc]' },
  { name: '宽度', value: '979', sub: true, bg: 'bg-[#ffffbf]' },
  { name: '高度', value: '985', sub: true, bg: 'bg-[#ffffdc]' },
  { name: 'sizePolicy', value: '[Preferred, Preferred, 0, 0]', open: true, bg: 'bg-[#ffffbf]' },
  { name: '水平策略', value: 'Preferred', sub: true, bg: 'bg-[#ffffdc]' },
  { name: '垂直策略', value: 'Preferred', sub: true, bg: 'bg-[#ffffbf]' },
  { name: '水平伸展', value: '0', sub: true, bg: 'bg-[#ffffdc]' },
  { name: '垂直伸展', value: '0', sub: true, bg: 'bg-[#ffffbf]' },
]

function DropMark() {
  return <svg viewBox="0 0 10 5" className="absolute right-[-2px] bottom-0 h-[5px] w-[10px]"><path d="M0 0h10L5 5z" /></svg>
}

function PropertyEditor() {
  return (
    <section className="mt-[9px]">
      <DockTitle title="属性编辑器" />
      <div className="mt-[17px] mb-[11px] flex items-center pr-3 pl-1">
        <Filter label="属性过滤" className="flex-1" />
        <button aria-label="添加动态属性" className="relative ml-2">
          <Icon>
            <path d="M8 1h6v7h7v6h-7v7H8v-7H1V8h7z" fill="url(#lime)" stroke="#0a9a0a" />
            <path d="M9.500 2.500h3M2.500 9.500h6.500" stroke="#d4ffd4" />
          </Icon>
          <DropMark />
        </button>
        <button aria-label="移除动态属性" className="ml-[18px]">
          <Icon>
            <rect x="0.5" y="7.5" width="21" height="6" fill="#d8d8d8" stroke="#a8a8a8" />
            <path d="M1.500 9h19" stroke="#f8f8f8" />
          </Icon>
        </button>
        <button aria-label="配置属性编辑器" className="relative ml-4">
          <Icon size="size-12" box="0 0 24 24">
            <path d="M14 9.500 3.500 20.500" stroke="#9c9c9c" strokeWidth="4" strokeLinecap="round" />
            <path d="M14 9.500 3.500 20.500" stroke="#dcdcdc" strokeWidth="2.4" strokeLinecap="round" />
            <path d="M14.500 10.500 6 19" stroke="#3c3c3c" strokeWidth="1.6" />
            <path d="M13 7c.5-4 4-6.500 8-5.500l-3.500 3.500 1.500 2.500 4-1.500c0 4-3.500 6-7 5.500z" fill="#d8d8d8" stroke="#a4a4a4" strokeWidth="0.8" />
            <circle cx="16" cy="8" r="1.3" fill="#555" />
          </Icon>
          <DropMark />
        </button>
      </div>
      <p className={`flex h-[30px] items-center border border-b-2 border-[#b8b8b8] px-[5px] pt-[3px] whitespace-pre ${thin}`}>box : QMainWindow</p>
      <div className="mt-[3px] flex border border-[#828790] bg-white px-px">
        <table className="min-w-0 flex-1 table-fixed border-collapse text-left">
          <thead>
            <tr className="h-[46px]">
              <th className="w-[314px] pl-2 font-normal">属性</th>
              <th className="border-x border-[#e5e5e5] pl-2 font-normal">值</th>
            </tr>
          </thead>
          <tbody>
            {properties.map(p => (
              <tr key={p.name} className={`h-10 border-b-2 border-[#d4d4d4] ${p.bg}`}>
                <td className="p-0" colSpan={p.kind === 'group' ? 2 : 1}>
                  <div className="flex h-[38px] items-center">
                    <span className="flex w-[46px] shrink-0 items-center pl-[11px]">{(p.kind === 'group' || p.open) && <Chevron />}</span>
                    <span className={`${p.sub ? 'pl-10' : ''} ${p.bold || p.kind === 'group' ? 'font-bold' : ''} ${p.kind === 'group' ? 'text-white' : p.muted ? 'text-[#808080]' : ''}`}>{p.name}</span>
                  </div>
                </td>
                {p.kind !== 'group' && (
                  <td className={`border-l-2 border-[#d4d4d4] py-0 pr-0 pl-[7px] ${p.muted ? 'text-[#808080]' : ''}`}>
                    {p.kind === 'check' ? <label aria-label="enabled" className="flex"><CheckBox id="enabled" checked /></label> : p.value}
                  </td>
                )}
              </tr>
            ))}
          </tbody>
        </table>
        <ScrollV thumb="h-[14%]" />
      </div>
    </section>
  )
}

function ResourceBrowser() {
  return (
    <section className="mt-[9px] flex min-h-0 flex-1 flex-col">
      <DockTitle title="资源浏览器" />
      <div className="mt-4 mb-[9px] flex items-center gap-[14px] pr-1 pl-[10px]">
        <button aria-label="编辑资源">
          <Icon>
            <path d="M.5 21.500 2.500 15 17.500 2l3.500 3.500L6 19z" fill="#f0a818" stroke="#a86c10" strokeWidth="0.8" />
            <path d="M4 16 18 3.500" stroke="#fde08c" strokeWidth="1.3" />
            <path d="M.5 21.500 2.500 15 6 19z" fill="#f6e0b0" />
            <path d="M.3 21.700l.8-2.700 1.600 1.700z" fill="#444" />
            <path d="M15.800 3.500l2-1.700L21.200 5l-2 2z" fill="#d8d8d8" />
            <circle cx="19.5" cy="2.8" r="2.2" fill="#d06c30" />
          </Icon>
        </button>
        <button aria-label="重新加载">
          <Icon>
            <path d="M17.500 15.500a7 7 0 1 1-.5-9.500" stroke="#17702a" strokeWidth="5" />
            <path d="M16.500 15a6.500 6.500 0 0 1-11 .5" stroke="#14d414" strokeWidth="4" />
            <path d="M20.500 1.500V11H11z" fill="#3a9248" />
          </Icon>
        </button>
        <Filter label="资源过滤" className="ml-auto w-[292px]" />
      </div>
      <div className="grid min-h-0 flex-1 grid-cols-2 gap-[10px]">
        <div className="border border-[#828790] bg-white pt-1 pl-[50px]">&lt;resource root&gt;</div>
        <div className="border border-[#828790] bg-white" />
      </div>
      <div role="tablist" className="flex h-10 shrink-0 items-start border-t-2 border-[#a8a8a8] pl-1">
        <button role="tab" className="h-9 w-[200px] border border-t-0 border-[#d9d9d9] pr-1">信号/槽编辑器</button>
        <button role="tab" className="h-9 w-[164px] border border-t-0 border-l-0 border-[#d9d9d9] pl-1">动作编辑器</button>
        <button role="tab" aria-selected="true" className="-mt-[2px] h-10 w-[172px] border border-t-0 border-[#d9d9d9] bg-white pt-[2px] pl-1">资源浏览器</button>
      </div>
    </section>
  )
}

const menus = [['文件', 'F'], ['', 'E', 'dit'], ['窗体', 'O'], ['视图', 'V'], ['设置', 'S'], ['窗口', 'W'], ['帮助', 'H']]

export default function App() {
  return (
    <div className="flex h-screen flex-col overflow-hidden bg-[#f0f0f0] font-['Noto_Sans','Noto_Sans_CJK_SC',sans-serif] text-[24px] leading-8 text-black">
      <PaintDefs />
      <div className="flex h-[45px] shrink-0 items-center bg-[#404040] pl-[5px] text-white">
        <svg viewBox="0 0 26 22" className="mr-[9px] h-[22px] w-[26px]" aria-hidden="true">
          <path d="M4 0h22v17l-4 5H0V5z" fill="#2fbf46" />
          <path d="M9.500 5.500h3.500q4 0 4 5.500t-4 5.500H9.500z" fill="none" stroke="#fff" strokeWidth="2" />
        </svg>
        <span className="flex-1">Qt 设计师 - Qt Designer</span>
        <div className="flex items-center gap-[72px] pr-[38px]">
          <button aria-label="最小化"><svg viewBox="0 0 21 21" className="size-[21px]"><path d="M0 10h21" stroke="#fff" strokeWidth="2" /></svg></button>
          <button aria-label="还原"><svg viewBox="0 0 21 21" className="size-[21px]" fill="none" stroke="#fff" strokeWidth="2"><path d="M1 5h15v15H1zM5 5V1h15v15h-4" /></svg></button>
          <button aria-label="关闭"><svg viewBox="0 0 21 21" className="size-[21px]" fill="none" stroke="#fff" strokeWidth="2"><path d="M1 1l19 19M20 1 1 20" /></svg></button>
        </div>
      </div>
      <nav className="flex h-[45px] shrink-0 items-center gap-[2px] border-b-2 border-[#f0f0f0] bg-white">
        {menus.map(([text, key, rest]) => (
          <button key={key} className="px-[17px]">
            {text}{rest ? '' : '('}<u className="underline-offset-4">{key}</u>{rest || ')'}
          </button>
        ))}
      </nav>
      <ToolBar />
      <div className="flex min-h-0 flex-1">
        <WidgetBox />
        <MdiArea />
        <aside className="flex w-[710px] shrink-0 flex-col pt-[2px]">
          <ObjectInspector />
          <PropertyEditor />
          <ResourceBrowser />
        </aside>
      </div>
      <footer className="flex h-10 shrink-0 items-center justify-between pr-2 pl-3">
        <span>在一个窗体布局中布局选中的窗口部件</span>
        <a href="https://blog.csdn.net/qissme" className="font-['Liberation_Sans',sans-serif] text-[16px] text-[#dcdcdc]">https://blog.csdn.net/qissme</a>
      </footer>
    </div>
  )
}
